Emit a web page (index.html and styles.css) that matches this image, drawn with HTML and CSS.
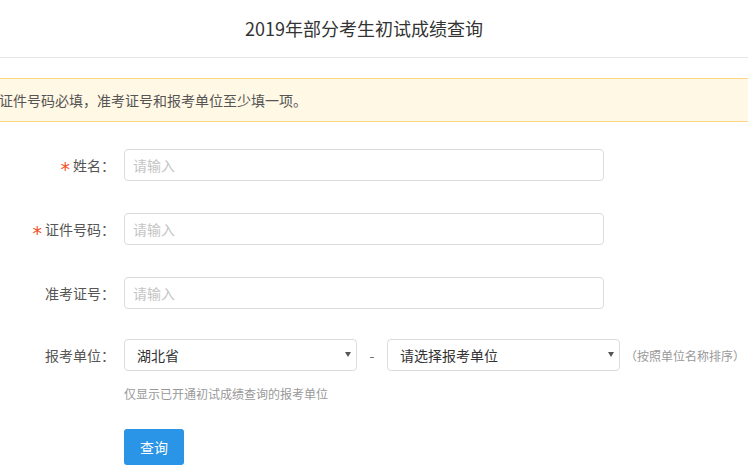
FILE: index.html
```html
<!DOCTYPE html>
<html>
<head>
	<title>2019年部分考生初试成绩查询</title>
	<meta charset="utf-8">
	<link rel="stylesheet" href="styles.css">
</head>
<body>
	<div class="header">
		<h1>2019年部分考生初试成绩查询</h1>
	</div>

	<div class="alert">姓名、证件号码必填，准考证号和报考单位至少填一项。</div>

	<form class="queryform" onsubmit="return false;">
		<div class="row">
			<label class="lbl"><span class="req">*</span>姓名：</label>
			<input class="txt" type="text" placeholder="请输入">
		</div>
		<div class="row">
			<label class="lbl"><span class="req">*</span>证件号码：</label>
			<input class="txt" type="text" placeholder="请输入">
		</div>
		<div class="row rowlast">
			<label class="lbl">准考证号：</label>
			<input class="txt" type="text" placeholder="请输入">
		</div>
		<div class="row rowunit">
			<label class="lbl">报考单位：</label>
			<span class="selwrap">
				<select class="sel">
					<option>湖北省</option>
				</select>
			</span>
			<span class="dash">-</span>
			<span class="selwrap">
				<select class="sel">
					<option>请选择报考单位</option>
				</select>
			</span>
			<span class="sortnote">（按照单位名称排序）</span>
		</div>
		<div class="hint">仅显示已开通初试成绩查询的报考单位</div>
		<div class="btnrow">
			<button class="querybtn" type="submit">查询</button>
		</div>
	</form>
</body>
</html>
```

FILE: styles.css
```css
html, body {
	margin: 0;
	padding: 0;
	overflow: hidden;
	background-color: #fff;
}
body {
	font-family: "Microsoft YaHei", "Noto Sans CJK SC", sans-serif;
	color: #555;
}
.header {
	height: 57px;
	border-bottom: 1px solid #e6e6e6;
	padding-right: 20px;
}
.header h1 {
	margin: 0;
	text-align: center;
	font-size: 18px;
	font-weight: normal;
	line-height: 56px;
	color: #333;
}
.alert {
	margin: 20px -30px 0 -45px;
	padding-left: 1px;
	height: 42px;
	line-height: 42px;
	font-size: 14px;
	color: #555;
	white-space: nowrap;
	background-color: #fff8e4;
	border: 1px solid #fcd684;
}
.queryform {
	margin-top: 27px;
}
.row {
	display: flex;
	align-items: center;
	height: 32px;
	margin-bottom: 32px;
}
.rowlast {
	margin-bottom: 30px;
}
.rowunit {
	margin-bottom: 0;
}
.lbl {
	width: 115px;
	text-align: right;
	font-size: 14px;
	color: #555;
	flex-shrink: 0;
}
.req {
	display: inline-block;
	vertical-align: -5px;
	font-family: "DejaVu Sans", sans-serif;
	font-size: 19px;
	line-height: 14px;
	color: #f2502a;
	margin-right: 3px;
}
.txt {
	box-sizing: border-box;
	margin-left: 9px;
	width: 480px;
	height: 32px;
	padding: 0 8px;
	border: 1px solid #dcdcdc;
	border-radius: 4px;
	font-family: inherit;
	font-size: 14px;
	color: #333;
	outline: none;
}
.txt::placeholder {
	color: #c4c4c4;
}
.selwrap {
	position: relative;
	display: inline-block;
	width: 233px;
	height: 32px;
}
.row .selwrap:first-of-type {
	margin-left: 9px;
}
.selwrap::after {
	content: "";
	position: absolute;
	right: 6px;
	top: 13px;
	border-left: 3px solid transparent;
	border-right: 3px solid transparent;
	border-top: 5px solid #555;
	pointer-events: none;
}
.sel {
	-webkit-appearance: none;
	appearance: none;
	box-sizing: border-box;
	width: 100%;
	height: 32px;
	padding: 0 0 0 12px;
	border: 1px solid #dcdcdc;
	border-radius: 4px;
	background-color: #fff;
	font-family: inherit;
	font-size: 14px;
	color: #333;
	outline: none;
}
.dash {
	width: 30px;
	text-align: center;
	font-size: 14px;
	color: #666;
}
.sortnote {
	margin-left: 5px;
	font-size: 12px;
	color: #999;
	white-space: nowrap;
}
.hint {
	margin: 15px 0 0 124px;
	font-size: 12px;
	line-height: 16px;
	color: #999;
}
.btnrow {
	margin: 27px 0 0 124px;
}
.querybtn {
	width: 60px;
	height: 36px;
	border: none;
	border-radius: 3px;
	background-color: #2a94e6;
	color: #fff;
	font-family: inherit;
	font-size: 14px;
	cursor: pointer;
}
.querybtn:hover {
	background-color: #1f84d4;
}
```
